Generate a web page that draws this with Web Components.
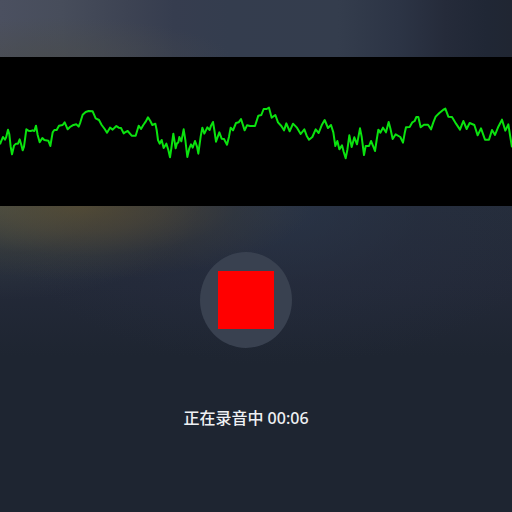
<!DOCTYPE html>
<html lang="zh-CN">
<head>
<meta charset="utf-8">
<meta name="viewport" content="width=device-width, initial-scale=1">
<title>录音</title>
<style>
  html, body { margin: 0; min-height: 100%; background: #1e2531; }
</style>
</head>
<body>
<voice-recorder>
  <wave-monitor slot="monitor"></wave-monitor>
  <stop-button slot="control"></stop-button>
  <record-status slot="status" time="00:06">正在录音中</record-status>
</voice-recorder>

<template id="recorder-template">
  <style>
    :host {
      display: flex;
      flex-direction: column;
      min-height: 100vh;
      color: #eef0f3;
      font: 500 16px/24px "Noto Sans", "Noto Sans CJK SC", sans-serif;
    }
    header {
      height: 57px;
      background:
        radial-gradient(ellipse 180px 40px at 50px 100%, rgba(74, 76, 74, .6), transparent),
        linear-gradient(to right, #4b5060 0%, #474d5b 12%, #3d4353 25%, #363d4f 34%, #343d4e 45%, #343d4d 66%, #2c3445 78%, #252b3a 87%, #202735 95%, #202632 100%);
    }
    main {
      flex: 1;
      display: flex;
      flex-direction: column;
      align-items: center;
      gap: 58px;
      padding: 46px 20px 32px 0;
      background:
        radial-gradient(ellipse 230px 74px at 80px 0, rgba(94, 80, 48, .7), rgba(88, 76, 50, .52) 35%, rgba(74, 68, 50, .22) 68%, transparent),
        radial-gradient(ellipse 200px 94px at 0 0, rgba(92, 108, 96, .5), rgba(70, 82, 80, .24) 50%, transparent),
        radial-gradient(ellipse 290px 160px at 280px 0, rgba(44, 56, 77, .6), rgba(40, 48, 68, .28) 50%, transparent),
        linear-gradient(#252d3b, #232938 80px, #1e2531 150px);
    }
  </style>
  <header></header>
  <slot name="monitor"></slot>
  <main>
    <slot name="control"></slot>
    <slot name="status"></slot>
  </main>
</template>

<template id="wave-template">
  <style>
    :host { display: block; height: 149px; background: #000; }
    svg { display: block; width: 100%; height: 100%; }
    polyline {
      fill: none;
      stroke: #0be30f;
      stroke-width: 2;
      stroke-linejoin: round;
      vector-effect: non-scaling-stroke;
    }
  </style>
  <svg viewBox="0 171 1536 447" preserveAspectRatio="none" role="img" aria-label="录音波形">
    <g transform="translate(0 285)">
      <polyline points="0,148 3,140 9,126 15,134 18,128 24,104 28,118 32,155 36,178 42,152 48,146 54,146 59,133 64,150 68,166 72,155 79,103 85,107 92,108 98,106 103,108 108,92 113,120 119,142 127,129 133,135 145,137 151,153 158,112 163,105 170,105 177,92 188,90 194,82 203,103 210,96 218,91 229,88 236,95 241,82 248,59 257,51 266,48 278,49 287,70 297,75 305,90 314,102 321,113 330,98 338,104 349,93 356,98 363,99 371,115
        375,112 383,108 395,122 407,122 416,92 423,102 430,90 437,80 444,67 451,78 457,90 466,86 470,105 474,135 479,146 485,135 491,159 499,146 505,165 510,187 514,160 520,116 527,160 531,145 535,142 538,126 544,139 551,103 556,135 562,186 568,160 573,148 578,158 585,138 591,155 595,176 602,125 607,98 613,116 622,97 629,105 633,92 639,81 643,105 648,140 658,112 665,131 672,132 681,149 687,125 692,98 699,106 708,84 716,82 723,72 734,106 741,91
        750,93 765,93 775,62 784,60 791,42 800,42 807,38 815,68 826,60 834,82 844,93 852,106 859,85 869,109 879,86 890,97 902,117 913,103 920,122 927,134 937,126 947,103 956,114 965,91 974,75 984,99 993,90 1000,112 1006,153 1012,138 1018,163 1026,151 1031,170 1037,190 1042,165 1048,121 1055,156 1063,127 1071,148 1080,100 1085,125 1092,180 1097,153 1107,153 1113,138 1120,155
        1125,168 1130,135 1135,104 1141,113 1149,98 1158,112 1166,81 1171,100 1178,132 1187,118 1201,126 1209,143 1214,115 1218,97 1229,96 1237,82 1244,78 1249,66 1255,66 1262,97 1272,89 1284,89 1293,103 1300,82 1307,65 1318,54 1330,44 1336,41 1345,65 1356,66 1368,86 1380,104 1390,78 1400,102 1409,84 1423,90 1433,121 1443,100 1455,134 1467,134 1476,105 1485,120 1495,95 1506,74 1516,107 1525,88 1530,120 1536,157"/>
    </g>
  </svg>
</template>

<template id="stop-template">
  <style>
    :host { display: block; }
    button {
      display: grid;
      place-items: center;
      width: 92px;
      height: 96px;
      padding: 0;
      border: 0;
      border-radius: 50%;
      background: #394150;
      cursor: pointer;
    }
    span { width: 56px; height: 58px; background: #f00; }
  </style>
  <button type="button" aria-label="停止录音"><span></span></button>
</template>

<template id="status-template">
  <style>
    :host { display: block; }
    p { margin: 0; white-space: nowrap; }
  </style>
  <p role="status"><slot></slot> <time></time></p>
</template>

<script>
  class TemplateElement extends HTMLElement {
    constructor() {
      super();
      const template = document.getElementById(this.constructor.templateId);
      this.attachShadow({ mode: "open" }).append(template.content.cloneNode(true));
    }
  }

  class VoiceRecorder extends TemplateElement {
    static templateId = "recorder-template";
  }

  class WaveMonitor extends TemplateElement {
    static templateId = "wave-template";
  }

  class StopButton extends TemplateElement {
    static templateId = "stop-template";
  }

  class RecordStatus extends TemplateElement {
    static templateId = "status-template";
    static observedAttributes = ["time"];
    attributeChangedCallback(name, previous, value) {
      this.shadowRoot.querySelector("time").textContent = value;
    }
  }

  customElements.define("voice-recorder", VoiceRecorder);
  customElements.define("wave-monitor", WaveMonitor);
  customElements.define("stop-button", StopButton);
  customElements.define("record-status", RecordStatus);
</script>
</body>
</html>
